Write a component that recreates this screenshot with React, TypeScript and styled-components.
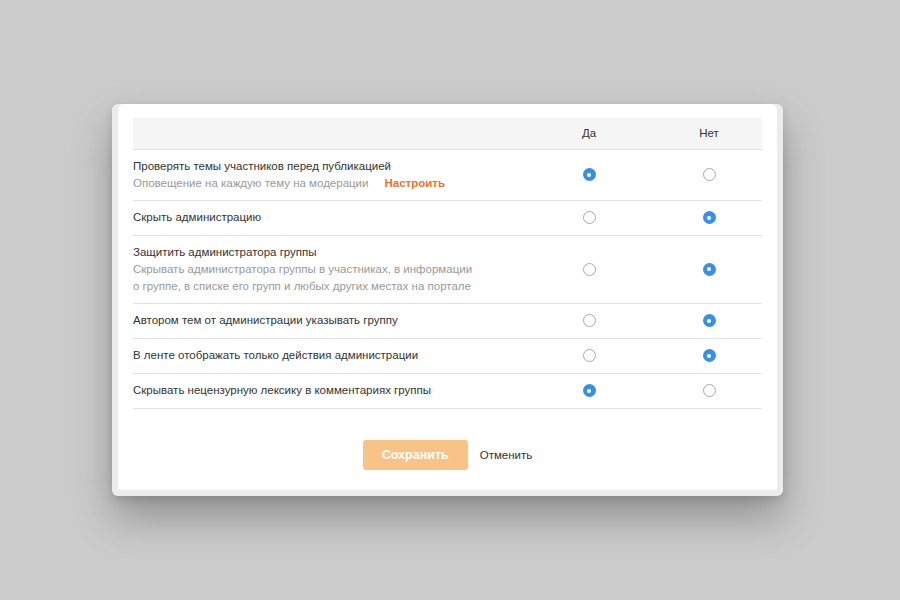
import React from "react";
import styled, { createGlobalStyle } from "styled-components";

const GlobalStyle = createGlobalStyle`
  html, body {
    margin: 0;
    padding: 0;
    height: 100%;
  }
  body {
    background: #cbcbcb;
    font-family: "Liberation Sans", Arial, sans-serif;
    color: #333;
  }
  #root {
    height: 100%;
  }
`;

const Page = styled.div`
  height: 100%;
  display: flex;
  align-items: center;
  justify-content: center;
  padding-right: 5px;
  box-sizing: border-box;
`;

const Modal = styled.div`
  width: 671px;
  box-sizing: border-box;
  background: #ececec;
  border-radius: 6px;
  padding: 0 6px 6px;
  box-shadow: 0 22px 40px rgba(0, 0, 0, 0.28), 0 4px 10px rgba(0, 0, 0, 0.12);
`;

const Body = styled.div`
  background: #fff;
  border-radius: 6px 6px 2px 2px;
  padding: 14px 15px 20px;
`;

const Table = styled.div`
  display: grid;
  grid-template-columns: 1fr 120px 113px;
`;

const HeadCell = styled.div<{ shift?: number }>`
  box-sizing: border-box;
  background: #f5f5f5;
  height: 32px;
  display: flex;
  align-items: center;
  justify-content: center;
  font-size: 11.5px;
  color: #333;
  border-bottom: 1px solid #e2e2e2;
  padding-left: ${({ shift }) => shift || 0}px;
`;

const Cell = styled.div<{ shift?: number }>`
  border-bottom: 1px solid #e2e2e2;
  padding: 8px 0 9px;
  display: flex;
  align-items: center;
  justify-content: center;
  padding-left: ${({ shift }) => shift || 0}px;
`;

const LabelCell = styled.div`
  border-bottom: 1px solid #e2e2e2;
  padding: 8px 0 9px;
  font-size: 11.5px;
  line-height: 17px;
`;

const Title = styled.div`
  color: #333;
`;

const Hint = styled.div`
  color: #999;
  max-width: 343px;
  line-height: 16.5px;
`;

const Link = styled.a`
  color: #eb722e;
  font-weight: bold;
  margin-left: 16px;
  text-decoration: none;
`;

const Radio = styled.span<{ checked: boolean }>`
  width: 13px;
  height: 13px;
  border-radius: 50%;
  box-sizing: border-box;
  position: relative;
  background: ${({ checked }) => (checked ? "#3a8fe3" : "#fff")};
  border: ${({ checked }) => (checked ? "none" : "1px solid #a9a9a9")};
  &::after {
    content: "";
    display: ${({ checked }) => (checked ? "block" : "none")};
    position: absolute;
    left: 4.5px;
    top: 4.5px;
    width: 4px;
    height: 4px;
    border-radius: 50%;
    background: #fff;
  }
`;

const Footer = styled.div`
  display: flex;
  justify-content: center;
  align-items: center;
  gap: 12px;
  margin-top: 31px;
`;

const SaveButton = styled.button`
  width: 105px;
  height: 30px;
  border: none;
  border-radius: 3px;
  background: #f8c386;
  color: #fff;
  font-family: inherit;
  font-size: 12.5px;
  font-weight: bold;
  cursor: default;
`;

const CancelButton = styled.button`
  border: none;
  background: none;
  padding: 0;
  font-family: inherit;
  font-size: 11.5px;
  color: #333;
  cursor: pointer;
`;

type Row = {
  title: string;
  hint?: string;
  link?: string;
  yes: boolean;
};

const rows: Row[] = [
  {
    title: "Проверять темы участников перед публикацией",
    hint: "Оповещение на каждую тему на модерации",
    link: "Настроить",
    yes: true,
  },
  { title: "Скрыть администрацию", yes: false },
  {
    title: "Защитить администратора группы",
    hint: "Скрывать администратора группы в участниках, в информации о группе, в списке его групп и любых других местах на портале",
    yes: false,
  },
  { title: "Автором тем от администрации указывать группу", yes: false },
  { title: "В ленте отображать только действия администрации", yes: false },
  { title: "Скрывать нецензурную лексику в комментариях группы", yes: true },
];

export default function App() {
  return (
    <>
      <GlobalStyle />
      <Page>
        <Modal>
          <Body>
            <Table>
              <HeadCell />
              <HeadCell>Да</HeadCell>
              <HeadCell shift={7}>Нет</HeadCell>
              {rows.map((r) => (
                <React.Fragment key={r.title}>
                  <LabelCell>
                    <Title>{r.title}</Title>
                    {r.hint && (
                      <Hint>
                        {r.hint}
                        {r.link && <Link href="#">{r.link}</Link>}
                      </Hint>
                    )}
                  </LabelCell>
                  <Cell>
                    <Radio checked={r.yes} />
                  </Cell>
                  <Cell shift={7}>
                    <Radio checked={!r.yes} />
                  </Cell>
                </React.Fragment>
              ))}
            </Table>
            <Footer>
              <SaveButton>Сохранить</SaveButton>
              <CancelButton>Отменить</CancelButton>
            </Footer>
          </Body>
        </Modal>
      </Page>
    </>
  );
}
